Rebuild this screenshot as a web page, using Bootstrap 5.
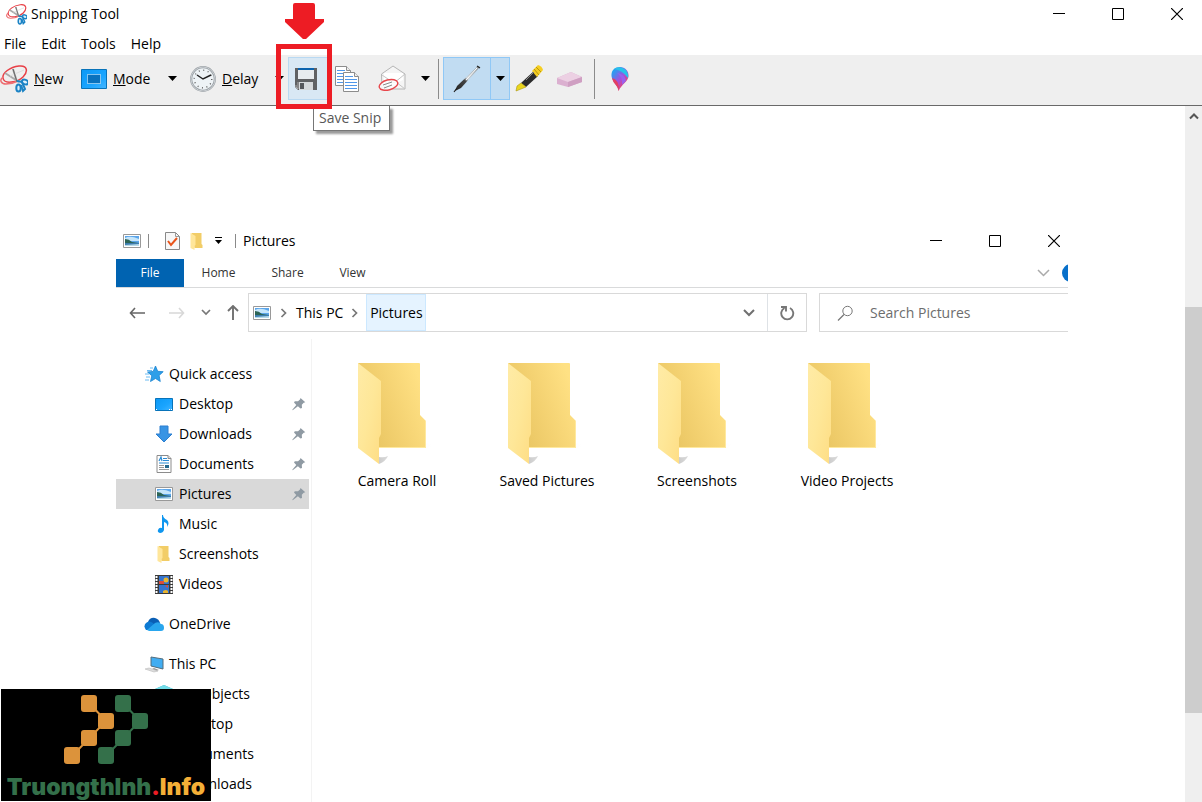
<!DOCTYPE html>
<html lang="en">
<head>
<meta charset="utf-8">
<meta name="viewport" content="width=device-width, initial-scale=1">
<title>Snipping Tool</title>
<link href="https://cdn.jsdelivr.net/npm/bootstrap@5.3.0/dist/css/bootstrap.min.css" rel="stylesheet">
<style>
  body { font: 14px/20px "Open Sans", "Noto Sans", sans-serif; color: #000; background: #fff; }
  svg { display: block; flex: none; }
  button { border: 0; background: none; padding: 0; color: inherit; display: flex; align-items: center; }
  a { color: inherit; text-decoration: none; }
  .title-row { height: 28px; padding-left: 6px; }
  .win-controls button { width: 59px; height: 26px; justify-content: center; }
  .app-controls { margin-right: -4px; }
  .menu-row { height: 27px; padding: 6px 0 0 4px; gap: 15px; }
  .tool-row { height: 51px; padding-bottom: 3px; background: #efefef; border-bottom: 1px solid #696969; }
  .tool-row button { height: 43px; }
  .tool-label { width: 81px; gap: 6px; }
  .tool-caret { width: 20px; justify-content: center; }
  .tool-caret.send-caret { width: 28px; justify-content: flex-end; }
  .tool-save { width: 42px; background: #d9e8f4; border: 1px solid #b9d9f2; padding-left: 6px; }
  .tool-pen { background: #c1dcf2; border: 1px solid #90c8f6; height: 43px; }
  .tool-pen button { height: 41px; }
  .tool-pen button + button { border-left: 1px solid #90c8f6; width: 19px; justify-content: center; }
  .tool-sep { width: 1px; height: 40px; background: #8b8b8b; }
  .save-tip { left: 25px; top: 49px; height: 25px; padding: 0 8px 0 5px; border: 1px solid #767676; border-top: 0; background: #fff; color: #575757; box-shadow: 3px 3px 2px #9a9a9a; white-space: nowrap; line-height: 23px; z-index: 3; }
  .callout-box { left: -12px; top: -13px; width: 56px; height: 65px; border: 5px solid #ed1c24; z-index: 4; pointer-events: none; }
  .callout-arrow { left: -3px; top: -54px; z-index: 4; }
  .scroll-track { width: 17px; background: #efefef; }
  .scroll-track button { height: 20px; }
  .scroll-thumb { margin-top: 181px; height: 406px; background: #cdcdcd; }
  .explorer { margin: 116px 117px 0 116px; }
  .explorer-title { height: 37px; padding-left: 7px; }
  .explorer-title .win-controls { margin-right: -15px; }
  .thin-sep { width: 1px; height: 14px; margin: 0 7px; background: #8a8a8a; }
  .ribbon { height: 29px; border-bottom: 1px solid #d9dadb; font-size: 12px; color: #333; }
  .ribbon button { height: 28px; justify-content: center; }
  .ribbon .file-tab { width: 68px; background: #0063b1; color: #fff; }
  .ribbon .tab-item { width: 69px; }
  .ribbon .tab-view { width: 61px; }
  .help-dot { width: 6px; height: 18px; }
  .nav-row { height: 51px; padding-top: 5px; }
  .nav-arrows { width: 132px; height: 39px; padding-left: 13px; }
  .path-box { height: 39px; border: 1px solid #d9d9d9; }
  .refresh { width: 39px; }
  .crumb-on { height: 37px; background: #e5f3ff; border: 1px solid #cce8ff; width: 60px; justify-content: center; }
  .search-box { width: 249px; height: 39px; border: 1px solid #d9d9d9; border-right: 0; margin-left: 12px; padding-left: 17px; gap: 16px; }
  .search-box input { border: 0; outline: 0; padding: 0; width: 180px; color: #6d6d6d; }
  .search-box input::placeholder { color: #6d6d6d; opacity: 1; }
  .side { width: 196px; padding: 20px 2px 0 0; border-right: 1px solid #f3f3f3; flex: none; }
  .side a { height: 30px; padding: 0 3px 0 38px; gap: 5px; display: flex; align-items: center; white-space: nowrap; }
  .side a.root { padding-left: 28px; }
  .side a.spaced { margin-top: 10px; }
  .side a.current { background: #d9d9d9; }
  .side .pin { margin-left: auto; }
  .folders { padding: 23px 0 0 10px; }
  .folders a { width: 150px; text-align: center; }
  .folders svg { margin: 0 auto 5px; }
  .brand-mark { left: 1px; bottom: 1px; width: 210px; height: 112px; background: #000; z-index: 5; padding-top: 5px; }
  .brand-name { font: 900 23px/28px Inter, "Open Sans", sans-serif; color: #34704a; text-align: center; padding-top: 7px; }
  .brand-name b { font-weight: 900; color: #f4af37; }
  .brand-name i { font-style: normal; color: #ed1c24; }
</style>
</head>
<body class="vh-100 overflow-hidden d-flex flex-column position-relative">
<svg width="0" height="0" class="position-absolute" aria-hidden="true">
  <defs>
    <linearGradient id="foldBack" x1="0.1" x2="1" y1=".8" y2=".4"><stop offset="0" stop-color="#e8c460"/><stop offset=".5" stop-color="#f4d272"/><stop offset="1" stop-color="#ffe184"/></linearGradient>
    <linearGradient id="foldFront" x1="0" x2="1" y1="0" y2="1"><stop offset="0" stop-color="#ffeba6"/><stop offset=".5" stop-color="#fee798"/><stop offset="1" stop-color="#fedd84"/></linearGradient>
    <linearGradient id="foldShade" x1="0" x2="1"><stop offset="0" stop-color="#ccc"/><stop offset="1" stop-color="#fff" stop-opacity="0"/></linearGradient>
    <linearGradient id="blueSheen" x1="0" x2="1" y1="0" y2="1"><stop offset="0" stop-color="#0a98f5"/><stop offset=".6" stop-color="#1ba5ff"/><stop offset="1" stop-color="#45b6ff"/></linearGradient>
    <linearGradient id="penBody" x1="0" x2="1" y1="1" y2="0"><stop offset="0" stop-color="#222"/><stop offset=".4" stop-color="#444"/><stop offset=".5" stop-color="#ccd3d8"/><stop offset="1" stop-color="#8b9297"/></linearGradient>
    <linearGradient id="p3d" x1="0" x2=".8" y1="0" y2="1"><stop offset="0" stop-color="#00b8f5"/><stop offset=".3" stop-color="#4b86ed"/><stop offset=".55" stop-color="#a34fe0"/><stop offset=".8" stop-color="#e0457d"/><stop offset="1" stop-color="#ee8b23"/></linearGradient>
    <symbol id="snip" viewBox="0 0 28 28">
      <g fill="none" stroke="#e84047" stroke-width="1.5"><path d="M3 13C2 8 10 2 19 1c9-1 9 6 4 11-5 5-19 8-20 1z"/><path d="M3 12c-4 3-2 7 3 7 4 0 8-1 12-3" stroke="#ee6f73"/></g>
      <path d="M5 8l14 9M13 4l4 13" stroke="#aaa" stroke-width="2"/><path d="M10 11l14-6" stroke="#ddd" stroke-width="1"/><path d="M13 4l4 13" stroke="#666"/>
      <g fill="#dceffb" stroke="#1b83c5" stroke-width="2"><ellipse cx="25" cy="17" rx="3.200" ry="2.300" transform="rotate(20 25 17)"/><ellipse cx="18.500" cy="23" rx="2.200" ry="3.600"/><path d="M17 16l5 1 3 7-2 2-2-6" fill="none"/></g>
    </symbol>
    <symbol id="photo" viewBox="0 0 18 14"><path d="M.5.5h17v13H.5z" fill="#fff" stroke="#999"/><path d="M2 2h14v10H2z" fill="#5ba5ea"/><path d="M2 4q5-3 14 1v2H2z" fill="#c5e5fa"/><path d="M2 5q4 0 7 3l7 1v1H2z" fill="#2c6455"/><path d="M2 9h14v3H2z" fill="#3b7cae"/><path d="M2 11l14-1v2H2z" fill="#b5d9e8"/></symbol>
    <symbol id="folderBig" viewBox="0 0 78 104">
      <path d="M68 81q5 2 9 1-3 3-9 4zM21 95q5 1 9-1-2 5-9 8z" fill="url(#foldShade)"/>
      <path d="M0 1h61q1 0 1 1v51l6 6v26q0 1-1 1H20z" fill="url(#foldBack)"/><path d="M21 85.500h46.500V59" fill="none" stroke="#ffe99f"/>
      <path d="M0 1l23 18v53l-2 4v26L0 86z" fill="url(#foldFront)"/>
    </symbol>
    <symbol id="folderTiny" viewBox="0 0 13 18"><path d="M1 1h10v11l1 1v3H4z" fill="#f2cd67"/><path d="M0 1l5 3v9l-1 1v4l-4-2z" fill="#ffe69a"/></symbol>
    <symbol id="pin" viewBox="0 0 14 14"><path d="M8.500 1l4.800 4.300-1.600.5-1.900 2 .2 3.200-1.500.6-2.600-2.400L1 13l-.7.2.2-.8L4.300 8 2 5.500l.8-1.300 3.200.1 2-1.700z" fill="#8f9aa3"/></symbol>
    <symbol id="desk" viewBox="0 0 18 13"><path d="M.5.5h17v12H.5z" fill="url(#blueSheen)" stroke="#0873b9"/><path d="M1 11.500h1M14 11.500h1M16 11.500h1" stroke="#fff"/></symbol>
    <symbol id="doc" viewBox="0 0 16 18"><path d="M1 .5h11l3 3v14H1z" fill="#fff" stroke="#8c8c8c"/><path d="M12 .5v3h3" fill="#ddd" stroke="#8c8c8c"/><path d="M3 6l2-4 1 4M7 3.500h4M7 5.500h6M3 8h10" fill="none" stroke="#2b8bd4" stroke-width="1.200"/><path d="M3 10.500h5M3 12.500h5M3 14.500h10" stroke="#999"/><path d="M9 10h4v3H9z" fill="#25698e"/></symbol>
    <symbol id="down" viewBox="0 0 18 18"><path d="M5 1h8v8h4l-8 8-8-8h4z" fill="#3894e4" stroke="#2c7fd0" stroke-linejoin="round"/></symbol>
    <symbol id="caret" viewBox="0 0 9 5"><path d="M0 0h9L4.500 5z"/></symbol>
    <symbol id="chevR" viewBox="0 0 6 10"><path d="M1 1l4 4-4 4" fill="none" stroke="#777" stroke-width="1.700"/></symbol>
    <symbol id="page" viewBox="0 0 16 20"><path d="M.5.5h11l4 4v15H.5z" fill="#fff" stroke="#8c8c8c"/><path d="M11.500.5v4h4" fill="#eee" stroke="#8c8c8c"/><path d="M2 4.500h8M2 7.500h12M2 10.500h12M2 13.500h12M2 16.500h12" stroke="#4f97ea"/></symbol>
    <symbol id="minus" viewBox="0 0 12 12"><path d="M0 5.500h12" stroke="#000"/></symbol>
    <symbol id="square" viewBox="0 0 12 12"><path d="M.5.5h11v11H.5z" fill="none" stroke="#000"/></symbol>
    <symbol id="cross" viewBox="0 0 12 12"><path d="M0 0l12 12M12 0L0 12" stroke="#000" stroke-width="1.200"/></symbol>
  </defs>
</svg>

<header>
  <div class="title-row d-flex align-items-center">
    <svg width="21" height="21"><use href="#snip"/></svg>
    <span class="ms-1">Snipping Tool</span>
    <div class="win-controls app-controls d-flex ms-auto">
      <button aria-label="Minimize"><svg width="12" height="12"><use href="#minus"/></svg></button>
      <button aria-label="Maximize"><svg width="12" height="12"><use href="#square"/></svg></button>
      <button aria-label="Close"><svg width="12" height="12"><use href="#cross"/></svg></button>
    </div>
  </div>
  <nav class="menu-row d-flex"><a href="#">File</a><a href="#">Edit</a><a href="#">Tools</a><a href="#">Help</a></nav>
  <div class="tool-row d-flex align-items-center">
    <button class="tool-label"><svg width="28" height="28"><use href="#snip"/></svg><span><u>N</u>ew</span></button>
    <button class="tool-label">
      <svg width="26" height="20" viewBox="0 0 26 20"><path d="M.5.5h25v19H.5z" fill="url(#blueSheen)" stroke="#0873b9"/><path d="M6.500 5.500h13v9h-13z" fill="#0a72bd" stroke="#fff" stroke-dasharray="1 1"/></svg>
      <span><u>M</u>ode</span></button>
    <button class="tool-caret" aria-label="Mode options"><svg width="9" height="5"><use href="#caret"/></svg></button>
    <button class="tool-label ms-2">
      <svg width="26" height="26" viewBox="0 0 26 26"><circle cx="13" cy="13" r="11.800" fill="#eef3f6" stroke="#9ba1a6" stroke-width="2.200"/><circle cx="13" cy="13" r="12" fill="none" stroke="#c9ced2"/><circle cx="13" cy="13" r="8.800" fill="none" stroke="#555" stroke-width="1.300" stroke-dasharray="1 3.608"/><path d="M7 9l6 4 8-4" fill="none" stroke="#222" stroke-width="1.400"/></svg>
      <span><u>D</u>elay</span></button>
    <button class="ps-1 me-1" aria-label="Delay options"><svg width="9" height="5"><use href="#caret"/></svg></button>
    <div class="position-relative">
      <button class="tool-save" aria-label="Save Snip">
        <svg width="23" height="23" viewBox="0 0 23 23"><path d="M0 1h22v22H3l-3-3z" fill="#606163"/><path d="M3 1h16v11H3z" fill="#e8ecef"/><path d="M3 1h16v2H3z" fill="#0b63ae"/><path d="M4 15h14v8H4z" fill="#d5d8da"/><path d="M5 16h4v6H5z" fill="#55575a"/><path d="M1 18v2l2 2V15" stroke="#aaa" fill="none"/></svg>
      </button>
      <div class="callout-box position-absolute"></div>
      <svg class="callout-arrow position-absolute" width="39" height="37" viewBox="0 0 39 37"><path d="M10 0h18q2 0 2 2v14h9v3L21 36h-3L0 19v-3h8V2q0-2 2-2z" fill="#ed1c24"/></svg>
      <div class="save-tip position-absolute" role="tooltip">Save Snip</div>
    </div>
    <button class="ms-1" aria-label="Copy">
      <svg width="28" height="28" viewBox="0 0 28 28"><use href="#page" x="1" y="1" width="16" height="20"/><use href="#page" x="9" y="7" width="16" height="20"/></svg>
    </button>
    <button class="ms-3" aria-label="Send Snip">
      <svg width="28" height="27" viewBox="0 0 28 27"><path d="M3.500 9L15 1l12 8v15h-23z" fill="#f5f5f5" stroke="#b5b5b5"/><path d="M6 8h19v7l-9 4-10-4z" fill="#fff"/><path d="M4 10l12 8L27 9M4 24l8-8M27 24l-9-7" fill="none" stroke="#c5c5c5"/><ellipse cx="10.500" cy="20" rx="9.500" ry="5" fill="#fff" fill-opacity=".8" stroke="#e8464b" stroke-width="1.400" transform="rotate(-15 10 20)"/><path d="M5 20l9-3M6 23l8-3" stroke="#888"/></svg>
    </button>
    <button class="tool-caret send-caret ms-1 pe-2" aria-label="Send options"><svg width="9" height="5"><use href="#caret"/></svg></button>
    <div class="tool-sep"></div>
    <div class="tool-pen d-flex ms-1">
      <button class="px-2" aria-label="Pen"><svg width="30" height="30" viewBox="0 0 30 30"><path d="M3 27l2-5L26 2l2 1L9 24z" fill="url(#penBody)"/><path d="M14 16L25 4" stroke="#fff" stroke-width="1"/><path d="M2 28l3-4M25 2l3 2" stroke="#222" stroke-width="1.200"/></svg></button>
      <button aria-label="Pen options"><svg width="9" height="5"><use href="#caret"/></svg></button>
    </div>
    <button class="ms-1" aria-label="Highlighter"><svg width="32" height="28" viewBox="-1 0 32 28"><path d="M6 18L19 6l4 5L11 22z" fill="#2b2b2b"/><path d="M17 6l6-6q4 1 5 5l-6 7z" fill="#f5ce23"/><path d="M19 4l5 6M21 2l5 5" stroke="#b8960f"/><path d="M11 15l8-8" stroke="#888"/><path d="M1 26l1-5 4-3 5 4-5 2z" fill="#ead51c" stroke="#a99612" stroke-width=".6"/></svg></button>
    <button class="ms-2" aria-label="Eraser"><svg width="32" height="20" viewBox="0 0 32 20"><path d="M3 9L17 3l11 5v5L14 18 3 15z" fill="#dbb0d0"/><path d="M3 9L17 3l11 5-14 5z" fill="#ecd0e3"/><path d="M14 13v5l14-5V8z" fill="#cf9fc2"/></svg></button>
    <div class="tool-sep ms-2"></div>
    <button class="ms-3" aria-label="Edit with Paint 3D"><svg width="18" height="26" viewBox="0 0 18 26"><path d="M9 1c5 0 9 4 8.500 9-.5 6-6 7-10 15C7 19 1 16 .5 10 .2 4 4 1 9 1z" fill="url(#p3d)"/><path d="M3 3q6-4 12 1 3 4 2 8Q11 4 3 3z" fill="#27c2ea"/><path d="M6 7q8 1 9 8l-4 4Q12 11 6 7z" fill="#9a60ed"/><path d="M1 12q7 1 7 13-1-4-4-7-2-2-3-6z" fill="#e23f63"/></svg></button>
  </div>
</header>

<main class="d-flex flex-grow-1 overflow-hidden">
  <section class="explorer flex-grow-1 d-flex flex-column">
    <div class="explorer-title d-flex align-items-center">
      <svg width="18" height="14"><use href="#photo"/></svg>
      <span class="thin-sep me-3"></span>
      <svg width="15" height="18" viewBox="0 0 15 18" ><path d="M.5.5h10l4 4v13H.5z" fill="#f7f7f7" stroke="#888"/><path d="M10.500.5v4h4" fill="none" stroke="#999"/><path d="M3 9l3 4 6-7" fill="none" stroke="#e8541b" stroke-width="2"/></svg>
      <svg class="ms-2 me-2" width="18" height="18"><use href="#folderTiny"/></svg>
      <button class="pe-1" aria-label="Customize toolbar"><svg width="9" height="9" viewBox="0 0 9 9"><path d="M1 1.500h7" stroke="#000"/><path d="M1 4h7L4.500 8z"/></svg></button>
      <span class="thin-sep ms-2"></span>
      <span>Pictures</span>
      <div class="win-controls d-flex ms-auto">
        <button aria-label="Minimize window"><svg width="12" height="12"><use href="#minus"/></svg></button>
        <button aria-label="Maximize window"><svg width="12" height="12"><use href="#square"/></svg></button>
        <button aria-label="Close window"><svg width="12" height="12"><use href="#cross"/></svg></button>
      </div>
    </div>
    <div class="ribbon d-flex">
      <button class="file-tab">File</button>
      <button class="tab-item">Home</button>
      <button class="tab-item">Share</button>
      <button class="tab-view">View</button>
      <button class="ms-auto" aria-label="Expand ribbon"><svg width="13" height="8" viewBox="0 0 13 8"><path d="M1 1l5.500 5.500L12 1" fill="none" stroke="#aaa" stroke-width="1.500"/></svg></button>
      <button class="ms-2 ps-1" aria-label="Help"><svg class="help-dot" viewBox="0 0 6 18"><circle cx="9" cy="9" r="9" fill="#0870ca"/></svg></button>
    </div>
    <div class="nav-row d-flex">
      <div class="nav-arrows d-flex align-items-center">
        <button aria-label="Back"><svg width="16" height="12" viewBox="0 0 16 12"><path d="M6 1L1.500 6 6 11M1.500 6H16" fill="none" stroke="#666" stroke-width="1.600"/></svg></button>
        <button class="ms-4" aria-label="Forward"><svg width="16" height="12" viewBox="0 0 16 12"><path d="M10 1l4.500 5-4.500 5M14.500 6H0" fill="none" stroke="#d8d8d8" stroke-width="1.600"/></svg></button>
        <button class="ms-3" aria-label="Recent"><svg width="10" height="7" viewBox="0 0 10 7"><path d="M1 1l4 4 4-4" fill="none" stroke="#777" stroke-width="1.700"/></svg></button>
        <button class="ms-3" aria-label="Up"><svg width="12" height="15" viewBox="0 0 12 15"><path d="M1 6l5-5 5 5M6 1v14" fill="none" stroke="#707070" stroke-width="1.900"/></svg></button>
      </div>
      <div class="path-box d-flex align-items-center flex-grow-1">
        <svg class="ms-1" width="18" height="14"><use href="#photo"/></svg>
        <svg class="ms-2 me-2" width="9" height="10"><use href="#chevR"/></svg>
        <a href="#">This PC</a>
        <svg class="ms-2 me-2" width="7" height="10"><use href="#chevR"/></svg>
        <a href="#" class="crumb-on d-flex align-items-center">Pictures</a>
        <button class="ms-auto me-2 pe-1" aria-label="Previous locations"><svg width="12" height="8" viewBox="0 0 12 8"><path d="M1 1l5 5 5-5" fill="none" stroke="#707070" stroke-width="2"/></svg></button>
        <button class="refresh h-100 border-start justify-content-center" aria-label="Refresh"><svg width="15" height="16" viewBox="0 0 15 16"><path d="M10 3A6 6 0 1 1 4.500 3M1 2h5v4.500" fill="none" stroke="#777" stroke-width="1.900"/></svg></button>
      </div>
      <label class="search-box d-flex align-items-center">
        <svg width="17" height="16" viewBox="0 0 17 16"><circle cx="10.500" cy="6" r="4.700" fill="none" stroke="#777"/><path d="M7 9.500L1 15.500" stroke="#777" stroke-width="1.200"/></svg>
        <input type="text" placeholder="Search Pictures" aria-label="Search Pictures">
      </label>
    </div>
    <div class="d-flex flex-grow-1">
      <nav class="side">
        <a href="#" class="root"><svg width="20" height="18" viewBox="0 0 20 18"><path d="M11.500 1l2.200 5.300 5.500.4-4.100 3.800 1.200 6-4.800-3-5 3 1.300-5.800L3.500 7l5.700-.6z" fill="#2d9fe9" stroke="#1a84d0" stroke-width=".8"/><path d="M6 3h3M3 5.500h5M1 9h4M2 12h4M1 15h4" stroke="#6dbcf2"/></svg>Quick access</a>
        <a href="#"><svg width="20" height="13"><use href="#desk"/></svg>Desktop<svg class="pin" width="14" height="14"><use href="#pin"/></svg></a>
        <a href="#"><svg width="20" height="18"><use href="#down"/></svg>Downloads<svg class="pin" width="14" height="14"><use href="#pin"/></svg></a>
        <a href="#"><svg width="20" height="18"><use href="#doc"/></svg>Documents<svg class="pin" width="14" height="14"><use href="#pin"/></svg></a>
        <a href="#" class="current"><svg width="20" height="14"><use href="#photo"/></svg>Pictures<svg class="pin" width="14" height="14"><use href="#pin"/></svg></a>
        <a href="#"><svg width="20" height="18" viewBox="0 0 20 18"><path d="M9 0q0 3 4 5 3 3 0 7 1-4-3-5v8q-1 3-4 3-3-1-2-3 1-3 4-2V0z" fill="#0f96ef"/></svg>Music</a>
        <a href="#"><svg width="20" height="18"><use href="#folderTiny"/></svg>Screenshots</a>
        <a href="#"><svg width="20" height="19" viewBox="0 0 20 19"><path d="M1 0h18v19H1z" fill="#3a3a3a"/><path d="M5 1h10v8H5zM5 10h10v8H5z" fill="#3474cf"/><path d="M2.500 1v18M17.500 1v18" stroke="#fff" stroke-width="2" stroke-dasharray="2 1"/><circle cx="12" cy="5" r="2.500" fill="#e9b52f"/><path d="M5 6h5v3H5zM11 11l3-1v3z" fill="#db4c3c"/><path d="M9 16q3-2 5 0v2H9z" fill="#e9b52f"/></svg>Videos</a>
        <a href="#" class="root spaced"><svg width="20" height="14" viewBox="0 0 20 14"><path d="M4 5q2-5 7-4 4 1 5 5l-7 5z" fill="#0a5fb5"/><path d="M2 13q-3-4 0-7 3-3 7 0l6 7z" fill="#0d7ad3"/><path d="M3 13l8-7q4-2 6 1 3 0 3 4 0 3-3 3H5z" fill="#29a6ee"/></svg>OneDrive</a>
        <a href="#" class="root spaced"><svg width="20" height="17" viewBox="0 0 20 17"><path d="M7 1l12 2v10L7 10z" fill="#41adf2" stroke="#536c7c"/><path d="M10 12l5 2-3 1-4-2z" fill="#999"/><path d="M1 13l4-1 9 3-4 1z" fill="#ddd" stroke="#bbb" stroke-width=".6"/></svg>This PC</a>
        <a href="#"><svg width="20" height="20" viewBox="0 0 20 20"><path d="M10 1l9 4v10l-9 4-9-4V5z" fill="#35b7ca"/><path d="M10 1l9 4-9 4-9-4z" fill="#74dce8"/></svg>3D Objects</a>
        <a href="#"><svg width="20" height="13"><use href="#desk"/></svg>Desktop</a>
        <a href="#"><svg width="20" height="18"><use href="#doc"/></svg>Documents</a>
        <a href="#"><svg width="20" height="18"><use href="#down"/></svg>Downloads</a>
      </nav>
      <div class="folders d-flex flex-wrap align-content-start">
        <a href="#"><svg width="78" height="104"><use href="#folderBig"/></svg>Camera Roll</a>
        <a href="#"><svg width="78" height="104"><use href="#folderBig"/></svg>Saved Pictures</a>
        <a href="#"><svg width="78" height="104"><use href="#folderBig"/></svg>Screenshots</a>
        <a href="#"><svg width="78" height="104"><use href="#folderBig"/></svg>Video Projects</a>
      </div>
    </div>
  </section>
  <div class="scroll-track">
    <button class="w-100 justify-content-center" aria-label="Scroll up"><svg width="10" height="8" viewBox="0 0 10 8"><path d="M1 6.500l4-4 4 4" fill="none" stroke="#555" stroke-width="2"/></svg></button>
    <div class="scroll-thumb"></div>
  </div>
</main>

<aside class="brand-mark position-absolute">
  <svg class="mx-auto" width="86" height="72" viewBox="0 0 86 72">
    <g fill="none" stroke-width="2"><path d="M10 61L43 27 27 10" stroke="#dc933b"/><path d="M44 61l33-34L61 10" stroke="#34704a"/></g>
    <g fill="#dc933b"><rect x="18" y="1" width="16" height="17" rx="3"/><rect x="35" y="19" width="16" height="16" rx="3"/><rect x="18" y="36" width="16" height="16" rx="3"/><rect x="1" y="53" width="16" height="17" rx="3"/></g>
    <g fill="#34704a"><rect x="52" y="1" width="16" height="17" rx="3"/><rect x="69" y="19" width="16" height="16" rx="3"/><rect x="52" y="36" width="16" height="16" rx="3"/><rect x="35" y="53" width="16" height="17" rx="3"/></g>
  </svg>
  <div class="brand-name">Truongthlnh<i>.</i><b>Info</b></div>
</aside>
<script src="https://cdn.jsdelivr.net/npm/bootstrap@5.3.0/dist/js/bootstrap.bundle.min.js"></script>
</body>
</html>
